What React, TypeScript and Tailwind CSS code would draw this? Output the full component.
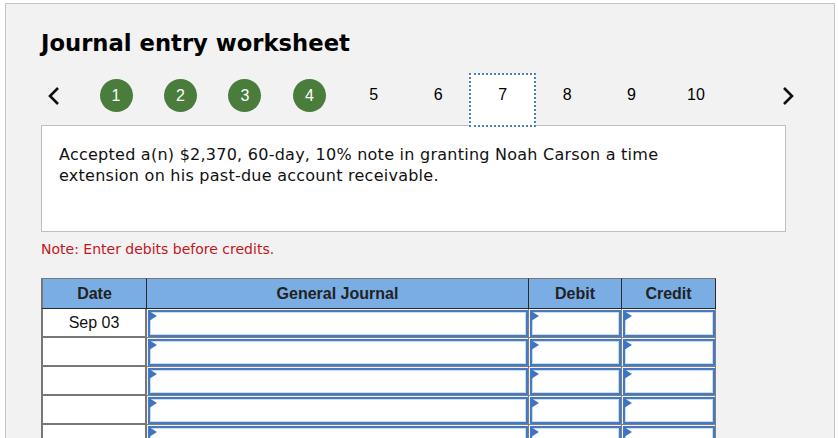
import React from 'react';

const steps = ['1', '2', '3', '4', '5', '6', '7', '8', '9', '10'];
const done = ['1', '2', '3', '4'];
const rows = ['Sep 03', '', '', '', ''];

function Chevron({ dir }: { dir: 'left' | 'right' }) {
    return (
        <svg width="14" height="20" viewBox="0 0 14 20">
            <path
                d={dir === 'left' ? 'M11 2 L3 10 L11 18' : 'M3 2 L11 10 L3 18'}
                fill="none"
                stroke="#111"
                strokeWidth="2.6"
            />
        </svg>
    );
}

function InputCell() {
    return (
        <div className="h-full border-r border-b border-[#808080] pl-[1px] pt-[1px]">
            <div className="relative h-full border-2 border-[#4679bf] bg-white shadow-[inset_0_0_0_1px_#c8dcf4]">
                <div className="absolute -left-[1px] -top-[1px] h-0 w-0 border-y-[5px] border-l-[8px] border-y-transparent border-l-[#3e74c1]" />
            </div>
        </div>
    );
}

export default function App() {
    return (
        <div className="h-[438px] w-[838px] overflow-hidden bg-white font-['Liberation_Sans',Arial,sans-serif]">
            <div className="ml-[5px] mt-[3px] h-[460px] w-[830px] border border-[#c4c4c4] bg-[#f2f2f2] pl-[35px] pr-[47px] pt-[25px]">
                <h1 className="h-[28px] text-[22.7px] font-bold leading-[28px] text-black font-['DejaVu_Sans',Verdana,sans-serif]">
                    Journal entry worksheet
                </h1>

                {/* step navigation */}
                <div className="mt-[16px] flex h-[52px] w-[760px] items-start">
                    <div className="mt-[13px] flex w-[26px] shrink-0 justify-center">
                        <Chevron dir="left" />
                    </div>
                    <div className="ml-[16.8px] flex shrink-0">
                        {steps.map(s => (
                            <div key={s} className="flex w-[64.44px] shrink-0 justify-center">
                                {done.includes(s) ? (
                                    <div className="mt-[6px] flex h-[33px] w-[33px] shrink-0 items-center justify-center rounded-full bg-[#4a7d3c] text-[16px] text-white">
                                        {s}
                                    </div>
                                ) : s === '7' ? (
                                    <div className="relative z-10 flex h-[54px] w-[67px] shrink-0 justify-center border-2 border-dotted border-[#4a7fc1] bg-white pt-[11px] text-[16px] leading-[18px] text-black">
                                        {s}
                                    </div>
                                ) : (
                                    <div className="mt-[13px] text-[16px] leading-[18px] text-black">{s}</div>
                                )}
                            </div>
                        ))}
                    </div>
                    <div className="ml-[46.8px] mt-[13px] flex w-[26px] shrink-0 justify-center">
                        <Chevron dir="right" />
                    </div>
                </div>

                {/* question */}
                <div className="h-[107px] w-[745px] border border-[#bfbfbf] bg-white pl-[17px] pt-[18px] text-[16px] leading-[21px] tracking-[0.25px] text-[#111] font-['DejaVu_Sans',Verdana,sans-serif]">
                    Accepted a(n) $2,370, 60-day, 10% note in granting Noah Carson a time
                    <br />
                    extension on his past-due account receivable.
                </div>

                <p className="mt-[8px] text-[14px] leading-[18px] text-[#c2171d] font-['DejaVu_Sans',Verdana,sans-serif]">
                    Note: Enter debits before credits.
                </p>

                {/* journal table */}
                <div className="mt-[20px] grid w-[675px] grid-cols-[106px_382px_93px_94px]">
                    {['Date', 'General Journal', 'Debit', 'Credit'].map((h, i) => (
                        <div
                            key={h}
                            className={`flex h-[31px] items-center justify-center border-t border-r border-b border-t-[#777] border-r-[#2a2a2a] border-b-[#2a2a2a] bg-[#79ade4] text-[16px] font-bold text-[#222] ${i === 0 ? 'border-l-2 border-l-[#777]' : ''}`}
                        >
                            {h}
                        </div>
                    ))}
                    {rows.map((d, r) => (
                        <React.Fragment key={r}>
                            <div className="flex h-[29px] items-center justify-center border-b-2 border-l-2 border-r-2 border-[#777] bg-white text-[16px] text-[#111]">
                                {d}
                            </div>
                            <div className="h-[29px]"><InputCell /></div>
                            <div className="h-[29px]"><InputCell /></div>
                            <div className="h-[29px]"><InputCell /></div>
                        </React.Fragment>
                    ))}
                </div>
            </div>
        </div>
    );
}
